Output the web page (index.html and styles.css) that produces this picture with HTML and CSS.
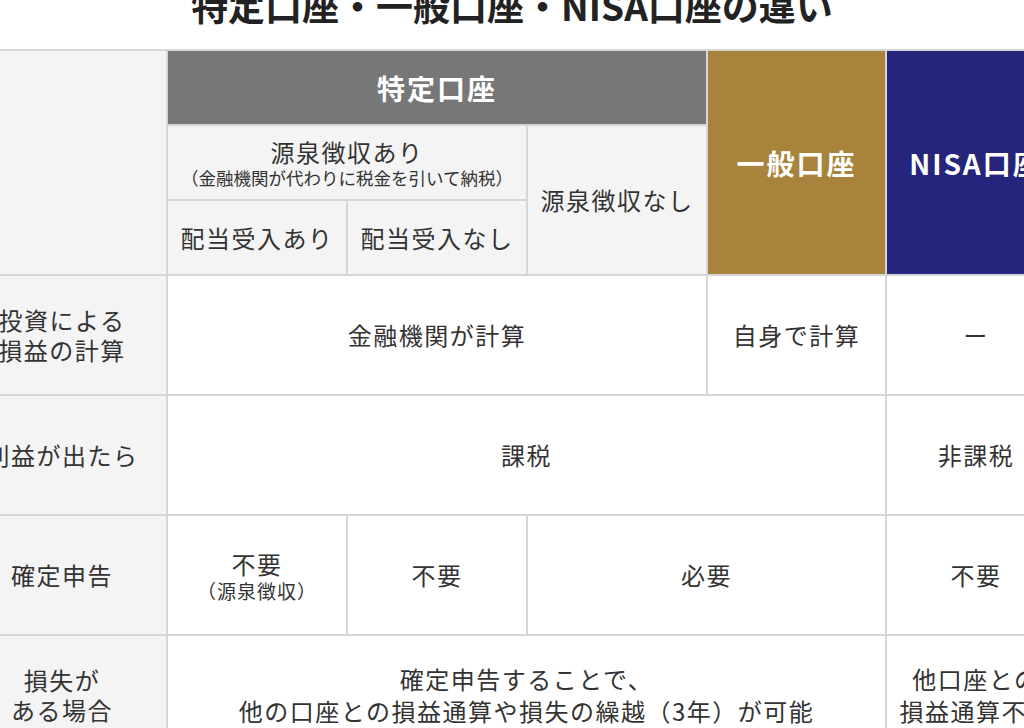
FILE: index.html
```html
<!DOCTYPE html>
<html lang="ja">
<head>
<meta charset="utf-8">
<title>特定口座・一般口座・NISA口座の違い</title>
<link rel="stylesheet" href="styles.css">
</head>
<body>
<div class="page">
  <h1 class="title">特定口座・一般口座・NISA口座の違い</h1>
  <table class="cmp">
    <colgroup>
      <col class="c-label">
      <col class="c-std"><col class="c-std"><col class="c-std"><col class="c-narrow"><col class="c-std">
    </colgroup>
    <tbody>
      <tr class="h1">
        <td class="blank" rowspan="3"></td>
        <th class="hd gray" colspan="3">特定口座</th>
        <th class="hd gold" rowspan="3">一般口座</th>
        <th class="hd navy" rowspan="3">NISA口座</th>
      </tr>
      <tr class="h2">
        <td class="sub" colspan="2">源泉徴収あり<span class="note">（金融機関が代わりに税金を引いて納税）</span></td>
        <td class="sub" rowspan="2">源泉徴収なし</td>
      </tr>
      <tr class="h3">
        <td class="sub">配当受入あり</td>
        <td class="sub">配当受入なし</td>
      </tr>
      <tr class="row">
        <th class="lbl">投資による<br>損益の計算</th>
        <td colspan="3">金融機関が計算</td>
        <td>自身で計算</td>
        <td>ー</td>
      </tr>
      <tr class="row">
        <th class="lbl">利益が出たら</th>
        <td colspan="4">課税</td>
        <td>非課税</td>
      </tr>
      <tr class="row">
        <th class="lbl">確定申告</th>
        <td class="tight">不要<span class="note2">（源泉徴収）</span></td>
        <td>不要</td>
        <td colspan="2">必要</td>
        <td>不要</td>
      </tr>
      <tr class="row">
        <th class="lbl">損失が<br>ある場合</th>
        <td colspan="4" class="tight">確定申告することで、<br>他の口座との損益通算や損失の繰越（3年）が可能</td>
        <td class="tight">他口座との<br>損益通算不可</td>
      </tr>
    </tbody>
  </table>
</div>
</body>
</html>
```

FILE: styles.css
```css
html, body {
  margin: 0;
  padding: 0;
  overflow: hidden;
  background: #ffffff;
}

body {
  font-family: "Noto Sans CJK JP", "Noto Sans", sans-serif;
  color: #333333;
  width: 1024px;
  height: 728px;
}

.page {
  width: 1024px;
}

.title {
  margin: -19px 0 0 0;
  height: 48px;
  line-height: 48px;
  font-size: 37px;
  font-weight: 700;
  text-align: center;
  color: #222222;
  letter-spacing: 0;
  white-space: nowrap;
}

.cmp {
  margin: 20px 0 0 -44px;
  border-collapse: collapse;
  table-layout: fixed;
  width: 1109px;
}

.c-label { width: 210px; }
.c-std { width: 180px; }
.c-narrow { width: 179px; }

.cmp td,
.cmp th {
  border: 2px solid #d6d6d6;
  padding: 0;
  text-align: center;
  vertical-align: middle;
  font-size: 24px;
  font-weight: 400;
  letter-spacing: 1.5px;
  line-height: 30px;
  color: #333333;
  background: #ffffff;
}

.h1 { height: 75px; }
.h2 { height: 75px; }
.h3 { height: 75px; }
.row { height: 120px; }

.cmp .blank,
.cmp .sub,
.cmp .lbl {
  background: #f4f4f4;
}

.cmp .hd {
  color: #ffffff;
  font-size: 28px;
  font-weight: 700;
  letter-spacing: 2px;
}

.cmp .gray { background: #777777; }
.cmp .gold { background: #a8833b; }
.cmp .navy { background: #25257b; }

.note {
  display: block;
  font-size: 17.5px;
  line-height: 22px;
  letter-spacing: 0;
}

.note2 {
  display: block;
  font-size: 19px;
  line-height: 22px;
  letter-spacing: 1px;
}

.cmp .tight {
  line-height: 32px;
}
```
